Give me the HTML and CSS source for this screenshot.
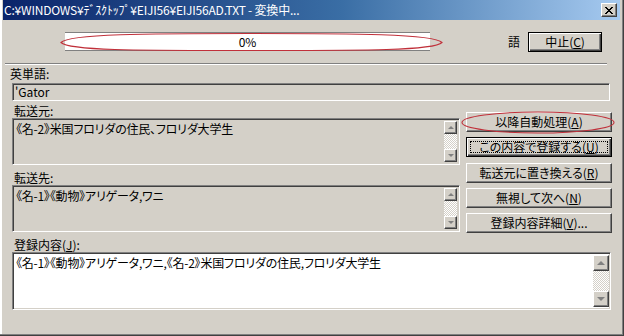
FILE: index.html
```html
<!DOCTYPE html>
<html lang="ja">
<head>
    <meta charset="UTF-8">
    <title>変換中</title>
    <link rel="stylesheet" href="styles.css">
</head>
<body>
    <div class="window">
        <div class="titlebar">
            <span class="title">C:¥WINDOWS¥ﾃﾞｽｸﾄｯﾌﾟ¥EIJI56¥EIJI56AD.TXT - 変換中...</span>
            <span class="close-btn">
                <svg width="8" height="7" viewBox="0 0 8 7"><path d="M0 0L7 7M1 0L8 7M7 0L0 7M8 0L1 7" stroke="#000" stroke-width="1" shape-rendering="crispEdges"/></svg>
            </span>
        </div>

        <div class="dialog">
            <div class="progress-row">
                <div class="progress">0%</div>
                <span class="lang">語</span>
                <button class="btn btn-default btn-cancel">中止(<u>C</u>)</button>
            </div>
            <div class="separator"></div>

            <div class="label label-word">英単語:</div>
            <div class="field field-line">'Gator</div>

            <div class="main">
                <div class="left">
                    <div class="label">転送元:</div>
                    <div class="field field-box">
                        <div class="field-text">《名-2》米国フロリダの住民、フロリダ大学生</div>
                        <div class="vscroll vscroll-small">
                            <span class="sb-btn"><i class="arrow-up"></i></span>
                            <span class="sb-track"></span>
                            <span class="sb-btn"><i class="arrow-down"></i></span>
                        </div>
                    </div>
                    <div class="label label-gap">転送先:</div>
                    <div class="field field-box">
                        <div class="field-text">《名-1》《動物》アリゲータ,ワニ</div>
                        <div class="vscroll vscroll-small">
                            <span class="sb-btn"><i class="arrow-up"></i></span>
                            <span class="sb-track"></span>
                            <span class="sb-btn"><i class="arrow-down"></i></span>
                        </div>
                    </div>
                </div>
                <div class="actions">
                    <button class="btn">以降自動処理(<u>A</u>)</button>
                    <button class="btn btn-default btn-focus">この内容で登録する(<u>U</u>)</button>
                    <button class="btn">転送元に置き換える(<u>R</u>)</button>
                    <button class="btn">無視して次へ(<u>N</u>)</button>
                    <button class="btn">登録内容詳細(<u>V</u>)...</button>
                </div>
            </div>

            <div class="label label-entry">登録内容(<u>J</u>):</div>
            <div class="field field-box field-entry">
                <div class="field-text">《名-1》《動物》アリゲータ,ワニ,《名-2》米国フロリダの住民,フロリダ大学生</div>
                <div class="vscroll">
                    <span class="sb-btn"><i class="arrow-up"></i></span>
                    <span class="sb-track"></span>
                    <span class="sb-btn"><i class="arrow-down"></i></span>
                </div>
            </div>
        </div>

        <!-- red marker rings drawn over the dialog -->
        <svg class="mark mark-progress" width="384" height="24" viewBox="0 0 384 24">
            <path d="M1 11.5C9 3 88 2.5 190 2.5C292 2.5 374 3 382 11.5C374 20 292 19.5 190 19.5C88 19.5 9 20 1 11.5Z" fill="none" stroke="#c0303a" stroke-width="1.1"/>
        </svg>
        <svg class="mark mark-auto" width="156" height="26" viewBox="0 0 156 26">
            <ellipse cx="78" cy="12.5" rx="76" ry="10.5" fill="none" stroke="#c0303a" stroke-width="1.1"/>
        </svg>
    </div>
</body>
</html>
```

FILE: styles.css
```css
body {
    margin: 0;
    background-color: #d4d0c8;
    font-family: "Noto Sans CJK JP", sans-serif;
    font-size: 12px;
    color: #000;
}
.window {
    position: relative;
    width: 624px;
    height: 336px;
    box-sizing: border-box;
    padding: 0 4px 0 3px;
    box-shadow: inset -1px -1px #404040, inset -2px -2px #808080, inset 2px 0 #fff;
}
.titlebar {
    height: 20px;
    display: flex;
    align-items: center;
    justify-content: space-between;
    padding: 0 3px 0 1px;
    background: linear-gradient(to right, #0a246a, #3a6ea5 55%, #a6caf0);
    color: #fff;
}
.title {
    line-height: 20px;
    letter-spacing: -0.2px;
    white-space: nowrap;
}
.close-btn {
    width: 16px;
    height: 14px;
    box-sizing: border-box;
    display: flex;
    align-items: center;
    justify-content: center;
    background: #d4d0c8;
    border: 1px solid;
    border-color: #fff #404040 #404040 #fff;
    box-shadow: inset -1px -1px #808080;
}
.dialog {
    font-feature-settings: "palt";
}
.progress-row {
    display: flex;
    align-items: center;
    height: 21px;
    margin-top: 11px;
    padding-left: 62px;
}
.progress {
    width: 365px;
    height: 19px;
    box-sizing: border-box;
    border-top: 1px solid #808080;
    border-bottom: 1px solid #808080;
    background: #fff;
    text-align: center;
    line-height: 17px;
}
.lang {
    margin-left: 78px;
    margin-right: 8px;
}
.btn-cancel {
    width: 74px;
    height: 21px;
}
.separator {
    width: 602px;
    margin: 11px 0 0 2px;
    border-top: 1px solid #808080;
    border-bottom: 1px solid #fff;
}
.label {
    height: 14px;
    line-height: 14px;
    padding-left: 2px;
    white-space: nowrap;
}
.label-word {
    margin: 2px 0 2px 7px;
    padding-left: 0;
}
.label-gap {
    margin-top: 6px;
}
.label-entry {
    margin: 5px 0 0 9px;
}
.field {
    box-sizing: border-box;
    border: 1px solid;
    border-color: #808080 #fff #fff #808080;
    box-shadow: inset 1px 1px #404040, inset -1px -1px #d4d0c8;
    background: #d4d0c8;
    white-space: nowrap;
}
.field-line {
    width: 598px;
    height: 18px;
    margin-left: 9px;
    padding: 1px 2px;
    line-height: 14px;
}
.main {
    display: grid;
    grid-template-columns: 448px 146px;
    column-gap: 6px;
    margin: 3px 0 0 9px;
}
.field-box {
    display: flex;
    height: 47px;
    padding: 2px;
}
.field-text {
    flex: 1;
    min-width: 0;
    line-height: 15px;
    padding-left: 1px;
    letter-spacing: -0.2px;
}
.field-entry {
    width: 599px;
    height: 58px;
    margin-left: 9px;
    background: #fff;
    padding: 2px 1px 2px 2px;
}
.vscroll {
    width: 16px;
    display: flex;
    flex-direction: column;
}
.vscroll-small {
    width: 13px;
}
.sb-btn {
    height: 16px;
    box-sizing: border-box;
    display: flex;
    align-items: center;
    justify-content: center;
    background: #d4d0c8;
    border: 1px solid;
    border-color: #fff #404040 #404040 #fff;
    box-shadow: inset -1px -1px #808080;
}
.vscroll-small .sb-btn {
    height: 13px;
}
.sb-track {
    flex: 1;
    background: repeating-conic-gradient(#fff 0 25%, #d4d0c8 0 50%) 0 0 / 2px 2px;
}
.arrow-up, .arrow-down {
    width: 0;
    height: 0;
    border-left: 4px solid transparent;
    border-right: 4px solid transparent;
}
.arrow-up {
    border-bottom: 4px solid #808080;
}
.arrow-down {
    border-top: 4px solid #808080;
}
.vscroll-small .arrow-up, .vscroll-small .arrow-down {
    border-left-width: 3px;
    border-right-width: 3px;
}
.vscroll-small .arrow-up {
    border-bottom-width: 3px;
}
.vscroll-small .arrow-down {
    border-top-width: 3px;
}
.actions {
    display: flex;
    flex-direction: column;
    gap: 5.25px;
    padding-top: 8px;
}
.btn {
    height: 20px;
    padding: 0;
    font: inherit;
    font-feature-settings: "palt";
    color: #000;
    background: #d4d0c8;
    border: 1px solid;
    border-color: #fff #404040 #404040 #fff;
    box-shadow: inset -1px -1px #808080;
    line-height: 16px;
    text-align: center;
    white-space: nowrap;
}
.btn-default {
    border-color: #000;
    box-shadow: inset 1px 1px #fff, inset -1px -1px #404040, inset -2px -2px #808080;
}
.btn-focus {
    outline: 1px dotted #000;
    outline-offset: -5px;
}
.mark {
    position: absolute;
    pointer-events: none;
}
.mark-progress {
    left: 60px;
    top: 31px;
}
.mark-auto {
    left: 460px;
    top: 110px;
}
```
